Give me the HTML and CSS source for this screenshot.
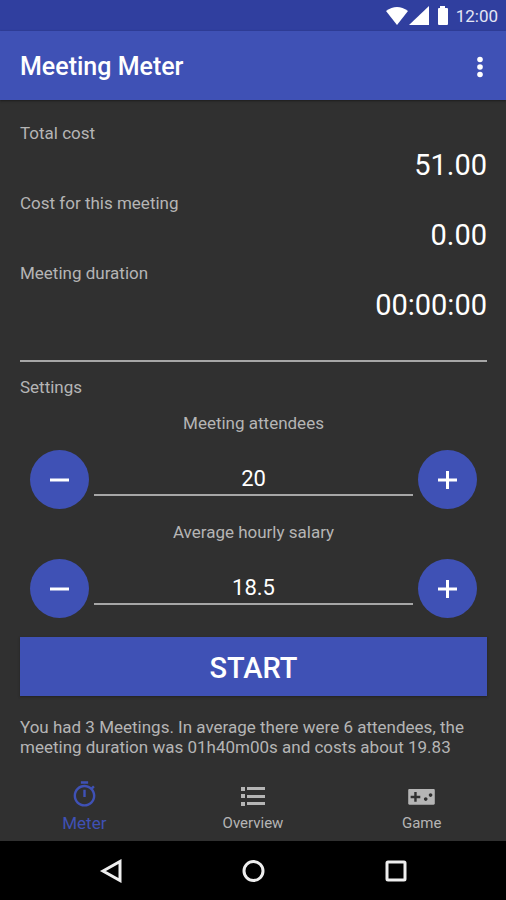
FILE: index.html
```html
<!DOCTYPE html>
<html lang="en">
<head>
<meta charset="utf-8">
<meta name="viewport" content="width=device-width, initial-scale=1">
<title>Meeting Meter</title>
<link rel="stylesheet" href="styles.css">
</head>
<body>
<div class="status-bar">
  <svg width="24" height="20" viewBox="0 0 24 20" aria-hidden="true"><path d="M1 5Q12-3 23 5L12 19z"/></svg>
  <svg width="20" height="20" viewBox="0 0 20 20" aria-hidden="true"><path d="M0 19L20 0V19z"/></svg>
  <svg class="battery" width="12" height="20" viewBox="0 0 12 20" aria-hidden="true"><path d="M3 0h5v2h2q1 0 1 1v15q0 1-1 1H2q-1 0-1-1V3q0-1 1-1h1z"/></svg>
  <span class="clock">12:00</span>
</div>
<header class="app-bar">
  <h1>Meeting Meter</h1>
  <button class="menu" type="button" aria-label="More options">
    <svg width="8" height="22" viewBox="0 0 8 22" aria-hidden="true"><circle cx="4" cy="3.500" r="2.800"/><circle cx="4" cy="11" r="2.800"/><circle cx="4" cy="18.500" r="2.800"/></svg>
  </button>
</header>
<main>
  <dl class="metrics">
    <div><dt>Total cost</dt><dd>51.00</dd></div>
    <div><dt>Cost for this meeting</dt><dd>0.00</dd></div>
    <div><dt>Meeting duration</dt><dd>00:00:00</dd></div>
  </dl>
  <section class="settings">
    <h2>Settings</h2>
    <div class="field">
      <label for="attendees">Meeting attendees</label>
      <div class="stepper">
        <button type="button" aria-label="Fewer attendees"><svg width="19" height="19" viewBox="0 0 19 19" aria-hidden="true"><path d="M0 10H19"/></svg></button>
        <input id="attendees" type="text" inputmode="numeric" value="20">
        <button type="button" aria-label="More attendees"><svg width="19" height="19" viewBox="0 0 19 19" aria-hidden="true"><path d="M0 10H19M9.500 1V19"/></svg></button>
      </div>
    </div>
    <div class="field">
      <label for="salary">Average hourly salary</label>
      <div class="stepper">
        <button type="button" aria-label="Lower salary"><svg width="19" height="19" viewBox="0 0 19 19" aria-hidden="true"><path d="M0 10H19"/></svg></button>
        <input id="salary" type="text" inputmode="decimal" value="18.5">
        <button type="button" aria-label="Higher salary"><svg width="19" height="19" viewBox="0 0 19 19" aria-hidden="true"><path d="M0 10H19M9.500 1V19"/></svg></button>
      </div>
    </div>
  </section>
  <button class="start" type="button">START</button>
  <p class="summary">You had 3 Meetings. In average there were 6 attendees, the meeting duration was 01h40m00s and costs about 19.83</p>
</main>
<nav class="tabs" aria-label="Sections">
  <a class="active" href="#meter" aria-current="page">
    <svg width="29" height="29" viewBox="0 0 24 24" aria-hidden="true"><path d="M15 1H9v2h6V1zm-4 13h2V8h-2v6zm8.030-6.610l1.420-1.420c-.43-.51-.9-.99-1.410-1.410l-1.420 1.420C16.070 4.740 14.120 4 12 4c-4.970 0-9 4.030-9 9s4.020 9 9 9 9-4.030 9-9c0-2.120-.74-4.070-1.970-5.610zM12 20c-3.870 0-7-3.130-7-7s3.130-7 7-7 7 3.130 7 7-3.130 7-7 7z"/></svg>
    <span>Meter</span>
  </a>
  <a href="#overview">
    <svg width="29" height="29" viewBox="0 0 29 29" aria-hidden="true"><path d="M2 7h4v4H2zM8 7h18v3H8zM2 14h4v4H2zM8 15h18v3H8zM2 22h4v4H2zM8 22h18v3H8z"/></svg>
    <span>Overview</span>
  </a>
  <a href="#game">
    <svg width="29" height="29" viewBox="0 0 24 24" aria-hidden="true"><path d="M22 7.500H2c-.6 0-1 .4-1 1v11c0 .6.4 1 1 1h20c.6 0 1-.4 1-1v-11c0-.6-.4-1-1-1zM11 15H8v3H6v-3H3v-2h3v-3h2v3h3v2zm4.500 2.300c-.8 0-1.500-.7-1.500-1.500s.7-1.500 1.500-1.500 1.500.7 1.500 1.500-.7 1.500-1.500 1.500zm4-3.300c-.8 0-1.500-.7-1.500-1.500s.7-1.500 1.500-1.500 1.500.7 1.500 1.500-.7 1.500-1.500 1.500z"/></svg>
    <span>Game</span>
  </a>
</nav>
<div class="system-nav">
  <button type="button" aria-label="Back"><svg width="24" height="24" viewBox="0 0 24 24" aria-hidden="true"><path d="M4 12L21 2.500V21.500z"/></svg></button>
  <button type="button" aria-label="Home"><svg width="24" height="24" viewBox="0 0 24 24" aria-hidden="true"><circle cx="12.500" cy="12" r="9.500"/></svg></button>
  <button type="button" aria-label="Recent apps"><svg width="24" height="24" viewBox="0 0 24 24" aria-hidden="true"><rect x="4" y="3" width="18" height="18" rx="1"/></svg></button>
</div>
</body>
</html>
```
FILE: styles.css
```css
* {
  box-sizing: border-box;
}

body {
  margin: 0;
  min-height: 100vh;
  display: flex;
  flex-direction: column;
  background: #303030;
  color: #b5b5b5;
  font-family: Roboto, sans-serif;
  font-size: 17px;
  line-height: 20px;
}

button {
  padding: 0;
  border: 0;
  background: none;
  color: #fff;
  font-family: inherit;
}

svg {
  display: block;
  fill: currentColor;
}

.status-bar {
  display: flex;
  justify-content: flex-end;
  align-items: center;
  height: 31px;
  padding-right: 8px;
  background: #303f9f;
  color: #fff;
}

.battery {
  margin: 0 7px 0 8px;
}

.clock {
  color: #e4e6f4;
}

.app-bar {
  display: flex;
  justify-content: space-between;
  align-items: center;
  height: 69px;
  padding: 2px 22px 0 20px;
  background: #3f51b5;
  color: #fff;
  box-shadow: 0 1px 2px #1c1c1c;
}

.app-bar h1 {
  margin: 0;
  font-size: 25px;
  font-weight: 500;
  line-height: 32px;
}

main {
  flex: 1;
  padding: 23px 19px 0 20px;
}

.metrics {
  display: grid;
  gap: 6px;
  margin: 0;
  padding-bottom: 33px;
  border-bottom: 2px solid #a6a6a6;
}

.metrics dd {
  margin: 0;
  color: #fff;
  font-size: 29px;
  line-height: 44px;
  text-align: right;
}

.settings h2 {
  margin: 15px 0 16px;
  font-size: 17px;
  font-weight: 400;
}

.field {
  margin-bottom: 13px;
}

.field label {
  display: block;
  text-align: center;
}

.stepper {
  display: flex;
  align-items: center;
  gap: 5px;
  margin-top: 17px;
  padding: 0 10px;
}

.stepper button {
  display: grid;
  place-items: center;
  flex: none;
  width: 59px;
  height: 59px;
  border-radius: 50%;
  background: #3f51b5;
}

.stepper svg {
  fill: none;
  stroke: currentColor;
  stroke-width: 3;
}

.stepper input {
  flex: 1;
  min-width: 0;
  height: 32px;
  padding: 0;
  border: 0;
  border-bottom: 2px solid #a6a6a6;
  border-radius: 0;
  outline: 0;
  background: none;
  color: #fff;
  font-family: inherit;
  font-size: 22px;
  text-align: center;
}

.start {
  display: block;
  width: 100%;
  height: 59px;
  padding-top: 2px;
  margin-top: 19px;
  background: #3f51b5;
  font-size: 29px;
  font-weight: 500;
  box-shadow: 0 1px 2px #222;
}

.summary {
  margin: 21px 0 0;
}

.tabs {
  display: flex;
  height: 71px;
  padding-top: 10px;
}

.tabs a {
  flex: 1;
  display: flex;
  flex-direction: column;
  align-items: center;
  gap: 4px;
  color: #b5b5b5;
  font-size: 15px;
  text-decoration: none;
}

.tabs .active {
  color: #3f51b5;
  font-size: 17px;
}

.system-nav {
  display: flex;
  justify-content: center;
  gap: 118px;
  height: 59px;
  background: #000;
}

.system-nav svg {
  fill: none;
  stroke: #eee;
  stroke-width: 3;
}
```
